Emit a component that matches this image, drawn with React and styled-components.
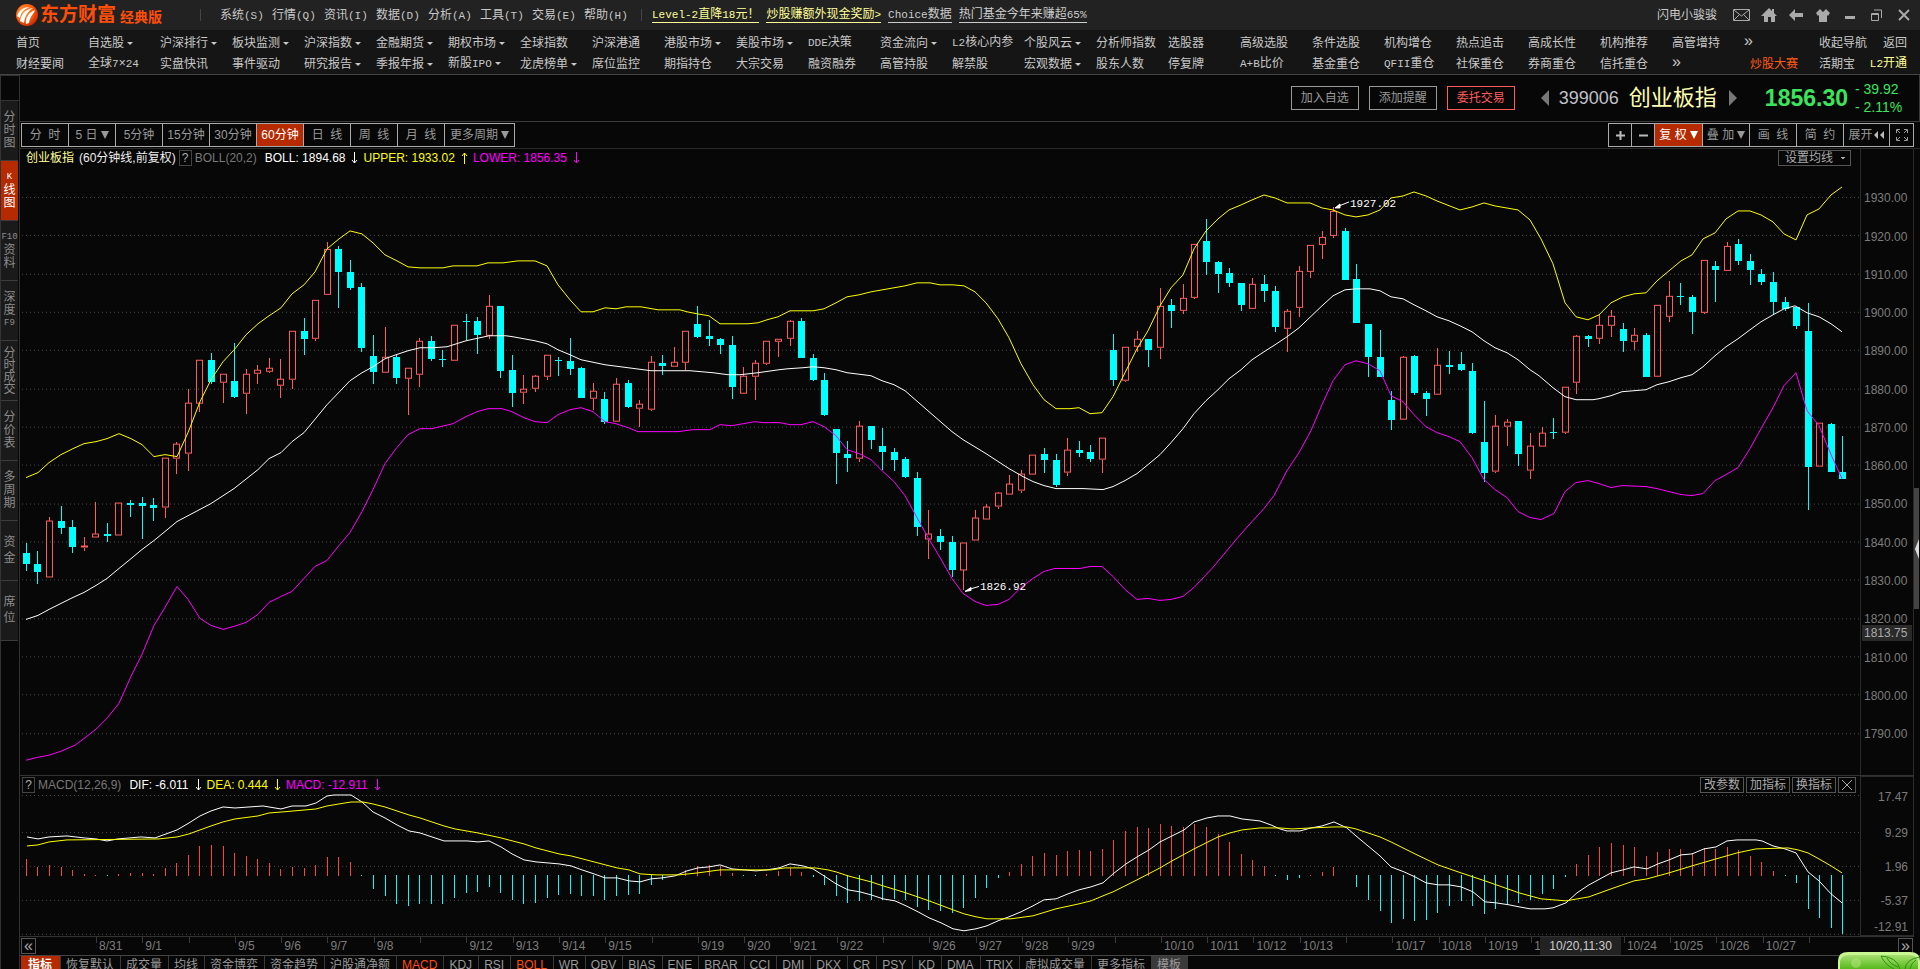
import React from "react";
import styled, { createGlobalStyle, css } from "styled-components";

const navTop = [
  "首页", "自选股*", "沪深排行*", "板块监测*", "沪深指数*", "金融期货*", "期权市场*", "全球指数",
  "沪深港通", "港股市场*", "美股市场*", "DDE决策", "资金流向*", "L2核心内参", "个股风云*", "分析师指数",
  "选股器", "高级选股", "条件选股", "机构增仓", "热点追击", "高成长性", "机构推荐", "高管增持",
];
const navBottom = [
  "财经要闻", "全球7×24", "实盘快讯", "事件驱动", "研究报告*", "季报年报*", "新股IPO*", "龙虎榜单*",
  "席位监控", "期指持仓", "大宗交易", "融资融券", "高管持股", "解禁股", "宏观数据*", "股东人数",
  "停复牌", "A+B比价", "基金重仓", "QFII重仓", "社保重仓", "券商重仓", "信托重仓",
];
const menus = ["系统(S)", "行情(Q)", "资讯(I)", "数据(D)", "分析(A)", "工具(T)", "交易(E)", "帮助(H)"];
const sideTabs = [
  ["分", "时", "图"], ["K", "线", "图"], ["F10", "资", "料"], ["深", "度", "F9"], ["分", "时", "成", "交"],
  ["分", "价", "表"], ["多", "周", "期"], ["资", "金"], ["席", "位"],
];
const periods = ["分  时", "5 日*", "5分钟", "15分钟", "30分钟", "60分钟", "日  线", "周  线", "月  线", "更多周期*"];
const indicators = [
  "指标", "恢复默认", "成交量", "均线", "资金博弈", "资金趋势", "沪股通净额", "MACD", "KDJ", "RSI", "BOLL",
  "WR", "OBV", "BIAS", "ENE", "BRAR", "CCI", "DMI", "DKX", "CR", "PSY", "KD", "DMA", "TRIX", "虚拟成交量",
  "更多指标", "模板",
];
const dates = [
  "8/31", "9/1", "", "9/5", "9/6", "9/7", "9/8", "", "9/12", "9/13", "9/14", "9/15", "", "9/19", "9/20",
  "9/21", "9/22", "", "9/26", "9/27", "9/28", "9/29", "", "10/10", "10/11", "10/12", "10/13", "", "10/17",
  "10/18", "10/19", "1", "", "10/24", "10/25", "10/26", "10/27", "",
];
const prices = Array.from({ length: 15 }, (_, i) => (1930 - i * 10).toFixed(2));

// u = up, d = down, then high, body top, body bottom, low on the chart canvas
const candles = `
d543,554,565,572 d552,565,573,585 u517,521,578,578 d506,521,528,534 d520,527,547,554 u537,546,548,552
u502,534,538,538 d523,534,536,542 u503,503,536,536 d500,503,505,517 d497,503,506,539 d498,505,508,521
u458,458,508,518 u442,444,459,474 u389,403,454,471 u360,360,404,412 d353,360,382,384 u374,374,383,403
d343,381,397,398 u369,374,394,414 u365,370,374,384 u358,368,372,373 u359,379,386,398 u331,331,380,389
d318,331,339,355 u300,300,339,341 u242,249,295,295 d246,249,272,308 d260,272,288,290 d283,287,348,352
d335,356,372,384 u327,357,373,373 d354,357,378,384 u368,368,379,415 u338,341,375,387 d336,341,359,361
d350,359,360,367 u325,325,361,361 d314,321,322,340 d317,321,335,354 u295,306,336,339 d306,306,371,378
d355,370,393,407 u375,389,393,404 u375,376,389,392 u355,355,377,380 d357,360,361,376 d338,361,369,375
d367,368,398,398 u383,391,399,410 d392,399,422,424 u378,384,422,422 d380,383,407,408 u400,404,409,427
u356,362,410,411 d355,363,366,375 u347,362,367,367 u331,331,363,370 d306,324,337,338 d320,336,339,346
d338,339,345,354 d336,345,387,399 u367,376,394,394 u360,363,377,400 u341,341,364,365 u339,339,342,357
u320,321,339,346 d318,321,358,358 d354,358,380,381 d373,380,415,416 d429,429,453,484 d441,454,458,472
u421,426,459,462 d426,426,440,449 d428,446,452,470 d448,452,460,471 d457,459,477,478 d472,478,527,536
u510,534,540,560 d529,536,542,551 d536,542,571,578 u543,543,571,591 u510,518,541,541 u504,507,520,520
u492,493,507,509 u475,484,495,495 u470,474,491,493 u455,455,475,475 d448,454,460,473 d454,460,485,487
u438,450,473,476 d441,450,453,457 d445,452,459,462 u438,438,460,473 d334,350,380,386 u347,347,381,382
u331,339,347,352 d339,339,350,367 u288,306,348,359 d299,305,311,328 u284,298,311,314 u244,244,298,299
d219,241,262,275 d261,262,274,293 d268,273,283,287 d283,283,305,311 u278,284,309,309 d275,284,291,302
d286,291,327,332 u309,311,329,352 u266,271,308,317 u245,245,272,278 u231,237,245,259 u207,211,236,238
d228,231,280,280 d264,279,323,323 d324,324,357,377 d330,357,377,377 d391,400,420,430 u356,357,420,420
d355,356,393,395 d391,393,399,416 u348,365,395,395 d351,365,367,374 d352,364,370,371 d363,371,433,434
d401,442,473,482 u415,426,472,473 u419,422,427,446 d421,421,454,466 u433,446,471,479 u427,433,447,447
d418,432,433,439 u387,387,433,434 u335,336,383,394 d335,336,339,347 u314,325,339,344 u310,316,326,337
d323,329,341,352 u328,335,342,350 d333,335,377,377 u305,305,377,377 u281,296,317,322 d283,296,297,305
d295,297,312,334 u260,260,313,314 d261,266,270,302 u242,246,271,271 d239,244,261,265 d254,261,270,285
d269,274,282,285 d272,282,302,315 d297,302,309,311 d307,307,326,329 d303,331,467,510 u423,423,467,467
d423,424,472,472 d436,472,479,479`
  .trim()
  .split(/\s+/)
  .map((c) => ({ up: c[0] === "u", v: c.slice(1).split(",").map(Number) }));

const upper =
  "26,478 38,473 49,463 61,455 73,449 84,444 96,442 107,439 119,434 131,439 142,445 154,457 165,455 177,457 188,433 200,402 211,380 223,362 235,349 246,335 258,324 269,316 281,308 292,294 304,285 315,272 327,249 339,239 350,231 362,234 373,243 385,255 397,261 408,267 420,268 443,268 453,266 477,266 488,263 503,263 518,261 535,261 547,266 558,285 570,300 581,312 593,312 605,308 616,309 626,307 641,307 658,310 680,310 687,312 697,314 709,316 720,324 748,324 758,323 767,320 778,317 790,311 813,311 824,309 836,303 847,297 859,295 871,292 905,286 917,283 930,283 940,285 953,285 964,286 975,292 986,303 998,319 1009,338 1021,364 1033,385 1044,400 1056,409 1070,409 1079,408 1090,414 1102,413 1113,397 1125,373 1137,349 1148,331 1160,306 1171,288 1183,275 1194,249 1206,231 1218,219 1229,210 1241,205 1252,200 1264,195 1275,198 1287,203 1310,203 1322,208 1333,210 1345,215 1356,217 1368,215 1380,210 1391,198 1403,196 1414,192 1426,196 1437,201 1460,210 1472,207 1484,203 1495,206 1518,210 1530,220 1541,239 1553,264 1565,303 1576,317 1588,320 1599,315 1611,303 1623,297 1634,294 1646,293 1657,281 1669,271 1681,261 1692,255 1703,239 1715,233 1726,219 1738,211 1750,211 1761,215 1773,222 1784,234 1796,240 1807,215 1819,209 1831,195 1842,187";
const middle =
  "26,620 38,616 49,610 61,604 73,598 84,593 96,586 107,579 119,569 130,560 142,550 154,541 165,532 177,522 211,504 234,489 258,470 269,459 281,453 292,442 304,433 327,405 350,381 362,373 373,367 385,359 396,355 408,351 420,348 433,348 447,347 466,341 489,336 506,336 513,337 535,341 547,344 558,350 570,355 581,360 605,365 651,371 690,371 713,373 728,375 740,375 758,373 779,370 788,369 803,368 813,367 824,368 836,370 847,373 871,376 882,381 894,385 905,391 929,412 952,432 963,440 986,454 1009,469 1023,477 1033,482 1044,486 1056,489 1083,489 1103,490 1113,487 1125,481 1137,474 1148,465 1160,455 1171,443 1183,429 1194,414 1206,401 1218,390 1229,379 1241,370 1252,360 1264,352 1275,345 1287,337 1299,328 1322,306 1333,296 1345,290 1356,289 1370,289 1380,291 1391,297 1403,299 1414,305 1426,311 1437,317 1449,321 1460,326 1472,332 1484,341 1495,348 1507,353 1518,360 1530,370 1539,376 1553,388 1565,397 1576,400 1593,400 1599,399 1611,396 1622,392 1646,390 1657,385 1669,382 1681,378 1692,375 1703,367 1715,356 1726,347 1738,339 1750,330 1761,322 1773,315 1784,309 1795,306 1807,313 1819,317 1831,324 1842,332";
const lower =
  "26,761 38,758 49,756 61,752 75,746 87,737 97,729 107,719 119,704 131,677 142,655 154,626 165,608 177,587 188,600 200,619 211,626 223,630 234,627 246,623 258,615 269,603 281,597 292,592 315,567 327,561 339,546 350,533 362,512 373,490 385,464 396,449 408,435 420,429 432,429 453,424 466,417 477,412 488,409 502,409 512,412 524,418 535,422 547,423 558,415 570,410 581,408 593,412 605,422 616,424 628,428 638,432 678,432 693,430 710,430 720,425 732,426 755,422 763,423 780,423 790,425 801,425 813,422 824,427 836,436 847,450 859,454 871,460 882,471 894,482 905,496 917,518 928,538 940,558 952,579 963,594 975,602 986,606 998,605 1009,600 1021,588 1033,579 1044,572 1055,569 1080,569 1090,567 1102,567 1113,577 1125,590 1137,600 1148,599 1160,601 1171,600 1183,597 1194,588 1212,569 1237,539 1252,522 1264,509 1274,496 1287,471 1299,453 1311,431 1322,405 1333,381 1345,365 1356,361 1368,364 1380,371 1391,396 1403,402 1414,415 1426,427 1437,433 1449,437 1460,442 1472,458 1484,480 1495,490 1507,498 1518,512 1530,518 1541,520 1554,514 1565,492 1576,483 1588,481 1599,484 1611,488 1622,486 1646,487 1657,489 1681,495 1692,496 1703,494 1715,481 1726,475 1738,468 1750,449 1761,429 1773,408 1784,386 1796,373 1807,411 1819,426 1831,455 1842,479";

const macdBars = [
  17, 9, 11, 9, 6, 2, 1, -1, 2, 3, 3, 2, 8, 13, 21, 30, 31, 30, 23, 20, 17, 13, 7, 9, 8, 11, 19, 19, 14, -1,
  -14, -21, -29, -31, -29, -29, -29, -23, -18, -17, -12, -18, -25, -29, -28, -23, -20, -19, -21, -21, -25,
  -21, -20, -19, -10, -5, 0, 6, 10, 11, 10, 3, -1, -1, 2, 5, 8, 4, -2, -10, -21, -28, -26, -25, -25, -24,
  -25, -32, -35, -36, -38, -33, -23, -13, -3, 4, 12, 20, 23, 21, 25, 26, 25, 27, 36, 45, 49, 48, 52, 50, 49,
  52, 49, 42, 34, 22, 16, 10, -1, -5, -3, 1, 4, 9, 0, -12, -25, -36, -48, -44, -46, -45, -38, -31, -26, -31,
  -39, -34, -29, -28, -25, -19, -14, -2, 12, 21, 29, 33, 31, 29, 20, 24, 27, 27, 23, 28, 27, 29, 26, 20, 14,
  5, -1, -8, -34, -43, -53, -59,
];
const dif =
  "27,77 38,79 49,77 67,76 84,78 96,79 107,81 118,79 141,77 155,78 166,74 177,70 189,63 200,56 211,51 223,47 235,48 263,46 281,49 292,46 306,46 316,43 327,36 334,35 351,35 362,42 373,52 385,58 397,65 409,71 420,73 432,77 444,81 467,81 478,82 489,81 501,87 512,94 524,100 536,102 559,104 571,106 582,110 594,114 605,118 617,118 629,121 640,122 651,119 662,118 675,116 687,111 698,108 709,107 720,105 732,109 744,110 756,111 767,110 779,108 790,104 803,106 813,109 824,116 836,124 848,130 860,132 871,135 883,139 895,141 906,146 918,152 929,158 941,163 953,169 964,171 976,169 987,166 998,161 1009,157 1021,152 1033,146 1044,140 1056,139 1068,134 1079,130 1091,127 1103,123 1113,114 1126,104 1137,97 1149,90 1160,82 1172,76 1184,70 1194,62 1207,58 1218,56 1230,56 1242,59 1260,61 1271,65 1280,69 1287,71 1300,71 1311,68 1322,66 1334,62 1347,68 1356,76 1368,86 1380,96 1391,107 1404,112 1415,117 1426,123 1438,125 1449,125 1461,127 1473,132 1485,142 1496,143 1509,145 1519,147 1530,149 1545,149 1553,148 1566,143 1577,133 1589,125 1600,119 1611,113 1623,110 1634,107 1647,109 1658,104 1669,100 1681,95 1692,94 1704,89 1716,87 1727,81 1737,80 1756,80 1762,81 1773,86 1785,89 1796,93 1808,112 1819,121 1831,134 1842,143";
const dea =
  "27,86 38,85 49,82 67,80 159,79 177,77 189,74 200,70 211,66 223,62 235,59 258,56 269,53 282,52 316,49 327,46 351,42 363,42 373,44 385,47 409,55 420,58 444,66 455,69 478,73 501,78 524,84 536,88 559,94 571,96 594,102 617,108 629,110 640,114 656,115 679,115 698,113 720,110 771,110 785,108 815,108 828,110 836,112 848,116 871,122 883,126 906,133 929,141 953,150 964,154 976,157 987,159 1011,159 1033,156 1056,149 1079,144 1091,141 1103,136 1113,132 1137,120 1160,108 1172,101 1194,89 1218,77 1230,73 1242,70 1260,68 1280,68 1292,69 1311,68 1334,67 1347,67 1356,69 1380,77 1391,82 1415,94 1438,105 1461,113 1485,121 1519,133 1541,139 1566,141 1589,137 1611,129 1634,121 1647,119 1669,113 1692,106 1716,99 1737,93 1756,89 1788,88 1798,90 1808,93 1819,99 1831,106 1842,113";

const barX = (i) => Math.floor(26.4 + (i * 1157) / 100);

// latin runs get the half-width face, hanzi keep the full-width one
const Mixed = ({ text }) =>
  text.split(/([\x21-\x7e]+)/).map((part, i) => (i % 2 ? <Half key={i}>{part}</Half> : part));

const NavItem = ({ text }) => (
  <NavLink href="#">
    <Mixed text={text.replace("*", "")} />
    {text.endsWith("*") && <Caret $size={3} />}
  </NavLink>
);

const Arrow = ({ up }) => (
  <ArrowSvg viewBox="0 0 7 12">
    <path d={up ? "M3.5 12V1M1 4l2.5-3L6 4" : "M3.5 0v11M1 8l2.5 3L6 8"} fill="none" stroke="currentColor" />
  </ArrowSvg>
);

const KChart = () => (
  <Plot viewBox="20 167 1840 609" preserveAspectRatio="none" shapeRendering="crispEdges">
    {prices.map((p, i) => {
      const y = Math.round(197 + (i * 230) / 6) + 0.5;
      return <line key={p} x1="22" x2="1860" y1={y} y2={y} stroke="#4a4a4a" strokeDasharray="1 3" />;
    })}
    {candles.map(({ up, v: [high, top, bottom, low] }, i) => {
      const x = barX(i);
      return up ? (
        <g key={i} fill="#ff5c5c">
          <rect x={x} y={high} width="1" height={top - high} />
          <rect x={x} y={bottom} width="1" height={low - bottom} />
          <rect x={x - 2.5} y={top + 0.5} width="6" height={Math.max(bottom - top - 1, 1)} fill="none" stroke="#ff5c5c" />
        </g>
      ) : (
        <g key={i} fill="#00ffff">
          <rect x={x} y={high} width="1" height={low - high} />
          <rect x={x - 3} y={top} width="7" height={Math.max(bottom - top, 1)} />
        </g>
      );
    })}
    <polyline points={upper} fill="none" stroke="#ffff00" />
    <polyline points={middle} fill="none" stroke="#ffffff" />
    <polyline points={lower} fill="none" stroke="#ff00ff" />
    <g fill="#ffffff" stroke="#ffffff">
      <path d="M1349 202L1339 206M1335 208l5-4v4z" />
      <path d="M979 587L969 590M965 592l6-4v3z" />
    </g>
    <Mark x="1350" y="207">1927.02</Mark>
    <Mark x="980" y="591">1826.92</Mark>
  </Plot>
);

const MacdChart = () => (
  <Plot viewBox="20 34 1840 142" preserveAspectRatio="none" shapeRendering="crispEdges">
    {[35, 72, 106, 140, 174].map((y) => (
      <line key={y} x1="22" x2="1862" y1={y + 0.5} y2={y + 0.5} stroke="#4a4a4a" strokeDasharray="1 3" />
    ))}
    {macdBars.map((h, i) => (
      <rect
        key={i}
        x={barX(i)}
        y={h > 0 ? 116 - h : 115}
        width="1"
        height={Math.abs(h)}
        fill={h > 0 ? "#ff4040" : "#00ffff"}
      />
    ))}
    <polyline points={dif} fill="none" stroke="#ffffff" />
    <polyline points={dea} fill="none" stroke="#ffff00" />
  </Plot>
);

const Logo = () => (
  <svg width="22" height="22" viewBox="0 0 22 22">
    <defs>
      <radialGradient id="ball" cx="35%" cy="35%" r="70%">
        <stop offset="0" stopColor="#ffa040" />
        <stop offset="0.6" stopColor="#ff5a0a" />
        <stop offset="1" stopColor="#c62a00" />
      </radialGradient>
    </defs>
    <circle cx="11" cy="11" r="11" fill="url(#ball)" />
    <path d="M1 12C3 6 8 3 14 3c-6 2-9 5-10 11z" fill="#fff" />
    <path d="M4 17C5 10 10 5 17 4c-6 4-8 8-9 15z" fill="#fff" />
    <path d="M10 20c-1-6 3-12 9-14 0 2-5 6-6 13z" fill="#fff" />
  </svg>
);

const App = () => {
  return (
    <Page>
      <GlobalStyle />
      <TitleBar>
        <Brand>
          <Logo />
          <BrandName>东方财富</BrandName>
          <Edition>经典版</Edition>
        </Brand>
        <Split />
        <MenuBar>
          {menus.map((m) => (
            <MenuButton key={m}>
              <Mixed text={m} />
            </MenuButton>
          ))}
        </MenuBar>
        <Split />
        <Promos>
          <Promo href="#" $hot><Mixed text="Level-2直降18元！" /></Promo>
          <Promo href="#" $hot><Mixed text="炒股赚额外现金奖励>" /></Promo>
          <Promo href="#"><Mixed text="Choice数据" /></Promo>
          <Promo href="#"><Mixed text="热门基金今年来赚超65%" /></Promo>
        </Promos>
        <User>闪电小骏骏</User>
        <WindowButtons>
          <IconButton aria-label="消息">
            <svg width="17" height="12" viewBox="0 0 17 12" fill="none" stroke="#aaa">
              <path d="M.5.5h16v11H.5zM1 1l7.500 6L16 1M1 11l5-5M16 11l-5-5" />
            </svg>
          </IconButton>
          <IconButton aria-label="主页">
            <svg width="16" height="14" viewBox="0 0 16 14" fill="#aaa">
              <path d="M8 0l3 3V1h2v4l3 3h-2v6h-4V9H7v5H3V8H0z" />
            </svg>
          </IconButton>
          <IconButton aria-label="后退">
            <svg width="14" height="12" viewBox="0 0 14 12" fill="#aaa"><path d="M0 6l6-6v4h8v4H6v4z" /></svg>
          </IconButton>
          <IconButton aria-label="换肤">
            <svg width="14" height="13" viewBox="0 0 14 13" fill="#aaa">
              <path d="M4 0l3 3 3-3 4 4-2 3-1-1v7H3V6L2 7 0 4z" />
            </svg>
          </IconButton>
          <IconButton aria-label="最小化">
            <svg width="10" height="12" viewBox="0 0 10 12" fill="#aaa"><path d="M0 7h10v3H0z" /></svg>
          </IconButton>
          <IconButton aria-label="还原">
            <svg width="11" height="12" viewBox="0 0 11 12" fill="none" stroke="#aaa">
              <path d="M.5 4.500h7v7h-7zM.5 5.500h7M3 1h7.500v8" />
            </svg>
          </IconButton>
          <IconButton aria-label="关闭">
            <svg width="12" height="12" viewBox="0 0 12 12" stroke="#aaa" strokeWidth="2"><path d="M1 1l10 10M11 1L1 11" /></svg>
          </IconButton>
        </WindowButtons>
      </TitleBar>

      <Nav>
        <NavRows>
          <NavRow>
            {navTop.map((n) => <NavItem key={n} text={n} />)}
            <More href="#">»</More>
          </NavRow>
          <NavRow>
            {navBottom.map((n) => <NavItem key={n} text={n} />)}
            <More href="#">»</More>
          </NavRow>
        </NavRows>
        <NavSide>
          <span />
          <SideLink href="#">收起导航</SideLink>
          <SideLink href="#" $end>返回</SideLink>
          <SideLink href="#" $color="#ff5a14">炒股大赛</SideLink>
          <SideLink href="#">活期宝</SideLink>
          <SideLink href="#" $end $color="#ffff99"><Mixed text="L2开通" /></SideLink>
        </NavSide>
      </Nav>

      <Body>
        <SideBar>
          <SideGap />
          {sideTabs.map((t) => (
            <SideTab key={t.join("")} $active={t[0] === "K"} $loose={t.length === 2} $tight={t.length === 4}>
              {t.map((c) => (/\w/.test(c) ? <SideLatin key={c}>{c}</SideLatin> : <span key={c}>{c}</span>))}
            </SideTab>
          ))}
        </SideBar>
        <Content>
          <Quote>
            <Actions>
              <ActionButton>加入自选</ActionButton>
              <ActionButton>添加提醒</ActionButton>
              <ActionButton $trade>委托交易</ActionButton>
            </Actions>
            <Step aria-label="上一个"><svg width="8" height="16"><path d="M8 0v16L0 8z" fill="#777" /></svg></Step>
            <Code>399006</Code>
            <Name>创业板指</Name>
            <Step aria-label="下一个"><svg width="8" height="16"><path d="M0 0v16l8-8z" fill="#777" /></svg></Step>
            <Price>1856.30</Price>
            <Change>
              <span>- 39.92</span>
              <span>- 2.11%</span>
            </Change>
          </Quote>

          <ToolBar>
            <Group>
              {periods.map((p) => (
                <ToolButton key={p} $active={p === "60分钟"} $width={p.length > 4 ? 70 : 47}>
                  {p.replace("*", "")}
                  {p.endsWith("*") && <Caret $size={4} $tall />}
                </ToolButton>
              ))}
            </Group>
            <Group>
              <ToolButton $width={23} aria-label="放大">
                <svg width="9" height="9" stroke="#bbb" strokeWidth="2"><path d="M0 4.500h9M4.500 0v9" /></svg>
              </ToolButton>
              <ToolButton $width={23} aria-label="缩小">
                <svg width="9" height="9" stroke="#bbb" strokeWidth="2"><path d="M0 4.500h9" /></svg>
              </ToolButton>
              <ToolButton $width={48} $active>复 权<Caret $size={4} $tall /></ToolButton>
              <ToolButton $width={47}>叠 加<Caret $size={4} $tall /></ToolButton>
              <ToolButton $width={47}>{"画  线"}</ToolButton>
              <ToolButton $width={47}>{"简  约"}</ToolButton>
              <ToolButton $width={46}>
                展开
                <svg width="12" height="8" fill="#bbb"><path d="M5 0v8L1 4zM11 0v8L7 4z" /></svg>
              </ToolButton>
              <ToolButton $width={24} aria-label="全屏">
                <svg width="12" height="12" viewBox="0 0 12 12" fill="none" stroke="#999">
                  <path d="M.5 4V.5H4M8 .5h3.500V4M11.500 8v3.500H8M4 11.500H.5V8M1 1l3 3M11 1L8 4M11 11L8 8M1 11l3-3" />
                </svg>
              </ToolButton>
            </Group>
          </ToolBar>

          <Desk>
            <Panes>
              <Pane $share={627}>
                <Canvas>
                  <InfoRow>
                    <Title>创业板指</Title>
                    <Period>(60分钟线,前复权)</Period>
                    <Help>?</Help>
                    <Formula>BOLL(20,2)</Formula>
                    <Value $color="#fff">BOLL: 1894.68<Arrow /></Value>
                    <Value $color="#ffff00">UPPER: 1933.02<Arrow up /></Value>
                    <Value $color="#ff00ff">LOWER: 1856.35<Arrow /></Value>
                    <Average aria-label="设置均线" defaultValue="a">
                      <option value="a">设置均线</option>
                    </Average>
                  </InfoRow>
                  <KChart />
                </Canvas>
                <PriceAxis>
                  {prices.map((p) => <span key={p}>{p}</span>)}
                  <PriceTag>1813.75</PriceTag>
                </PriceAxis>
              </Pane>
              <Pane $share={160} $line>
                <Canvas>
                  <InfoRow>
                    <Help>?</Help>
                    <Formula>MACD(12,26,9)</Formula>
                    <Value $color="#fff">DIF: -6.011<Arrow /></Value>
                    <Value $color="#ffff00">DEA: 0.444<Arrow /></Value>
                    <Value $color="#ff00ff">MACD: -12.911<Arrow /></Value>
                    <PaneButtons>
                      <SmallButton>改参数</SmallButton>
                      <SmallButton>加指标</SmallButton>
                      <SmallButton>换指标</SmallButton>
                      <SmallButton aria-label="关闭">
                        <svg width="10" height="10" stroke="#aaa"><path d="M0 0l10 10M10 0L0 10" /></svg>
                      </SmallButton>
                    </PaneButtons>
                  </InfoRow>
                  <MacdChart />
                </Canvas>
                <MacdAxis>
                  <span>17.47</span>
                  <span>9.29</span>
                  <span>1.96</span>
                  <span>-5.37</span>
                  <span>-12.91</span>
                </MacdAxis>
              </Pane>
              <TimeAxis>
                <Days>
                  <ScrollButton aria-label="向左">«</ScrollButton>
                  {dates.map((d, i) => <Day key={i}>{d}</Day>)}
                  <Cursor>10/20,11:30</Cursor>
                </Days>
                <ScrollButton aria-label="向右" $end>»</ScrollButton>
              </TimeAxis>
            </Panes>
            <Strip>
              <Thumb aria-label="展开侧栏">
                <svg width="4" height="20"><path d="M4 0v20L0 10z" fill="#ddd" /></svg>
              </Thumb>
            </Strip>
          </Desk>
          <Indicators>
            {indicators.map((t) => (
              <Tab key={t} $active={t === "指标"} $on={t === "MACD" || t === "BOLL"} $grey={t === "模板"}>
                {t}
              </Tab>
            ))}
          </Indicators>
        </Content>
      </Body>
      <Leaf viewBox="0 0 82 17">
        <defs>
          <linearGradient id="leaf" x2="0" y2="1">
            <stop offset="0" stopColor="#a8e070" />
            <stop offset="1" stopColor="#55b81c" />
          </linearGradient>
        </defs>
        <path d="M0 17V9Q0 0 10 0h62q10 0 10 9v8z" fill="#c9f792" />
        <path d="M2 17v-6Q2 3 11 3h60q9 0 9 8v6z" fill="url(#leaf)" />
        <path d="M43 4q16 1 19 13M43 4q4 9 13 13M49 6q3 6 11 9M82 5q-14 2-15 12M78 8q-5 3-6 9" fill="none" stroke="#2f8f12" />
        <circle cx="18" cy="11" r="5" fill="#b5ea80" opacity="0.5" />
      </Leaf>
    </Page>
  );
};

const GlobalStyle = createGlobalStyle`
  body {
    margin: 0;
    background: #070707;
    overflow: hidden;
  }
  * {
    box-sizing: border-box;
  }
  button, select {
    font: inherit;
    color: inherit;
    background: none;
    border: 0;
    border-radius: 0;
    padding: 0;
    margin: 0;
  }
  a {
    color: inherit;
    text-decoration: none;
  }
`;

const Page = styled.div`
  height: 100vh;
  display: flex;
  flex-direction: column;
  font-family: "Liberation Sans", "Noto Sans CJK SC", sans-serif;
  font-size: 12px;
  line-height: 14px;
  color: #aaa;
  background: #070707;
  overflow: hidden;
`;
const Half = styled.span`
  font-family: "Liberation Mono", monospace;
  font-size: 11px;
`;
const Caret = styled.i`
  display: inline-block;
  flex: none;
  width: 0;
  height: 0;
  vertical-align: middle;
  margin-left: 3px;
  border: ${(p) => p.$size}px solid transparent;
  border-top: ${(p) => (p.$tall ? 8 : p.$size)}px solid currentColor;
  border-bottom: 0;
`;

const TitleBar = styled.header`
  flex: none;
  display: flex;
  align-items: center;
  height: 30px;
  padding-right: 3px;
  background: #222;
  color: #c8c8c8;
`;
const Brand = styled.div`
  display: flex;
  align-items: center;
  width: 200px;
  padding-left: 16px;
  color: #ff4e08;
  font-weight: bold;
  white-space: nowrap;
`;
const BrandName = styled.span`
  margin-left: 2px;
  font-size: 19px;
  line-height: 24px;
`;
const Edition = styled.span`
  margin: 4px 0 0 4px;
  font-size: 14px;
`;
const Split = styled.i`
  width: 1px;
  height: 12px;
  background: #444;
`;
const MenuBar = styled.nav`
  display: flex;
  padding: 0 5px 0 19px;
`;
const MenuButton = styled.button`
  width: 52px;
  text-align: left;
  white-space: nowrap;
`;
const Promos = styled.div`
  flex: 1;
  display: flex;
  gap: 7px;
  padding-left: 10px;
`;
const Promo = styled.a`
  border-bottom: 1px solid;
  color: ${(p) => (p.$hot ? "#ffff99" : "#ccc")};
  white-space: nowrap;
`;
const User = styled.span`
  margin-right: 11px;
`;
const WindowButtons = styled.div`
  display: flex;
`;
const IconButton = styled.button`
  display: flex;
  align-items: center;
  justify-content: center;
  width: 27px;
  height: 20px;
`;

const Nav = styled.nav`
  flex: none;
  display: flex;
  justify-content: space-between;
  padding-top: 2px;
  background: #151515;
  border-bottom: 1px solid #444;
  color: #c8c8c8;
`;
const NavRows = styled.div`
  flex: 1;
  min-width: 0;
  padding-left: 16px;
`;
const NavRow = styled.div`
  display: flex;
  align-items: center;
  height: 21px;
`;
const NavLink = styled.a`
  flex: none;
  width: 72px;
  white-space: nowrap;
`;
const More = styled.a`
  width: 6px;
  font-size: 16px;
  line-height: 12px;
  padding-bottom: 4px;
`;
const NavSide = styled.div`
  display: grid;
  grid-template-columns: 69px 48px 40px;
  grid-auto-rows: 21px;
  align-items: center;
  padding-right: 13px;
`;
const SideLink = styled.a`
  color: ${(p) => p.$color || "inherit"};
  text-align: ${(p) => (p.$end ? "right" : "left")};
  white-space: nowrap;
`;

const Body = styled.div`
  flex: 1;
  min-height: 0;
  display: flex;
`;
const SideBar = styled.aside`
  flex: none;
  width: 20px;
  border: solid #333;
  border-width: 0 1px;
`;
const SideGap = styled.div`
  height: 26px;
  border: 1px solid #333;
  border-width: 1px 0;
`;
const SideTab = styled.button`
  display: flex;
  flex-direction: column;
  align-items: center;
  justify-content: center;
  gap: ${(p) => (p.$loose ? 3 : 0)}px;
  width: 17px;
  height: 60px;
  border-bottom: 1px solid #3c3c3c;
  line-height: ${(p) => (p.$tight ? 12 : 13)}px;
  ${(p) =>
    p.$active
      ? css`
          background: #b52a00;
          color: #fff;
        `
      : css`
          background: #1a1a1a;
          color: #8c8c8c;
        `}
`;
const SideLatin = styled.span`
  font-family: "Liberation Mono", monospace;
  font-size: 9px;
`;
const Content = styled.main`
  flex: 1;
  min-width: 0;
  display: flex;
  flex-direction: column;
`;

const Quote = styled.section`
  flex: none;
  display: flex;
  align-items: center;
  justify-content: flex-end;
  height: 47px;
  border: solid #3a3a3a;
  border-width: 0 1px 1px 0;
`;
const Actions = styled.div`
  display: flex;
  gap: 10px;
  margin-right: 26px;
`;
const ActionButton = styled.button`
  width: 68px;
  height: 24px;
  border: 1px solid;
  color: ${(p) => (p.$trade ? "#ff5b5b" : "#999")};
`;
const Step = styled.button`
  display: flex;
`;
const Code = styled.span`
  margin: 0 10px;
  font-size: 18px;
  line-height: 22px;
  color: #c0c0c8;
`;
const Name = styled.h1`
  margin: 0 12px 0 0;
  font-size: 22px;
  line-height: 28px;
  font-weight: normal;
  color: #ffffb0;
`;
const Price = styled.strong`
  margin: 0 7px 0 28px;
  font-size: 23px;
  line-height: 28px;
  color: #3ce45c;
`;
const Change = styled.div`
  display: flex;
  flex-direction: column;
  width: 64px;
  font-size: 14px;
  line-height: 18px;
  color: #3ce45c;
`;

const ToolBar = styled.div`
  flex: none;
  display: flex;
  justify-content: space-between;
  height: 27px;
  padding: 1px 6px 1px 1px;
  border-bottom: 1px solid #2a2a2a;
`;
const Group = styled.div`
  display: flex;
  border: 1px solid #aaa;
  border-right: 0;
`;
const ToolButton = styled.button`
  display: flex;
  align-items: center;
  justify-content: center;
  width: ${(p) => p.$width}px;
  border-right: 1px solid #aaa;
  background: ${(p) => (p.$active ? "#b52a00" : "none")};
  color: ${(p) => (p.$active ? "#fff" : "#999")};
  white-space: pre;
`;

const Desk = styled.div`
  flex: 1;
  min-height: 0;
  display: flex;
`;
const Panes = styled.div`
  flex: 1;
  min-width: 0;
  display: flex;
  flex-direction: column;
`;
const Pane = styled.section`
  flex: ${(p) => p.$share} 1 0;
  min-height: 0;
  display: grid;
  grid-template-columns: 1fr 54px;
  grid-template-rows: 100%;
  ${(p) =>
    p.$line &&
    css`
      border-top: 1px solid #333;
    `}
`;
const Canvas = styled.div`
  display: flex;
  flex-direction: column;
  min-width: 0;
  min-height: 0;
`;
const Plot = styled.svg`
  display: block;
  flex: 1;
  width: 100%;
  min-height: 0;
`;
const Mark = styled.text`
  font-family: "Liberation Mono", monospace;
  font-size: 11px;
  fill: #fff;
`;
const InfoRow = styled.div`
  flex: none;
  display: flex;
  align-items: center;
  height: 18px;
  padding: 0 4px 0 2px;
  white-space: nowrap;
`;
const Title = styled.span`
  margin: 0 5px 0 4px;
  color: #ffff99;
`;
const Period = styled.span`
  margin-right: 3px;
  color: #eee;
`;
const Help = styled.button`
  width: 13px;
  height: 16px;
  border: 1px solid #444;
`;
const Formula = styled.span`
  margin: 0 5px 0 3px;
  color: #777;
`;
const Value = styled.span`
  display: flex;
  align-items: center;
  margin: 0 2px 0 3px;
  color: ${(p) => p.$color};
`;
const ArrowSvg = styled.svg`
  width: 7px;
  height: 12px;
  margin-left: 6px;
`;
const Average = styled.select`
  appearance: none;
  width: 73px;
  height: 16px;
  margin: 0 5px 0 auto;
  padding-left: 6px;
  border: 1px solid #555;
  color: #aaa;
  line-height: 14px;
  background: linear-gradient(135deg, #aaa 50%, transparent 50%) 64px 6px / 3px 3px no-repeat,
    linear-gradient(225deg, #aaa 50%, transparent 50%) 61px 6px / 3px 3px no-repeat;
`;
const PaneButtons = styled.div`
  display: flex;
  gap: 2px;
  margin-left: auto;
`;
const SmallButton = styled.button`
  display: flex;
  align-items: center;
  height: 16px;
  padding: 0 3px;
  border: 1px solid #555;
`;
const PriceAxis = styled.div`
  position: relative;
  display: grid;
  grid-template-rows: 304fr repeat(15, 383fr) 221fr;
  align-items: center;
  padding-left: 3px;
  border: solid #2a2a2a;
  border-width: 0 1px;
  color: #7c7c7c;

  &::before {
    content: "";
  }
`;
const PriceTag = styled.strong`
  position: absolute;
  top: 76%;
  left: 1px;
  right: 1px;
  padding: 1px 2px;
  font-weight: normal;
  background: #2a2a2a;
  color: #aaa;
`;
const MacdAxis = styled.div`
  display: grid;
  grid-template-rows: 39fr 35fr 33fr 35fr 17fr;
  align-items: center;
  padding-right: 5px;
  border: 1px solid #2c2c2c;
  text-align: right;
  color: #7c7c7c;
`;
const TimeAxis = styled.div`
  flex: none;
  display: grid;
  grid-template-columns: 1fr 54px;
  height: 19px;
  border-top: 1px solid #333;
  color: #7c7c7c;
`;
const Days = styled.div`
  position: relative;
  display: grid;
  grid-template-columns: 760fr repeat(38, 463fr) 46fr;
`;
const Day = styled.span`
  min-width: 0;
  padding: 2px 0 0 3px;
  white-space: nowrap;
  background: linear-gradient(#3a3a3a, #3a3a3a) 0 0 / 1px 6px no-repeat;
`;
const Cursor = styled.strong`
  position: absolute;
  right: 13%;
  bottom: 0;
  padding: 2px 9px;
  font-weight: normal;
  background: #222;
  color: #ccc;
`;
const ScrollButton = styled.button`
  justify-self: ${(p) => (p.$end ? "end" : "start")};
  width: 15px;
  height: 16px;
  margin: 1px;
  border: 1px solid #555;
  font-size: 16px;
  line-height: 12px;
  color: #aaa;
`;
const Strip = styled.aside`
  flex: none;
  display: flex;
  flex-direction: column;
  width: 6px;
  padding-top: 339px;
`;
const Thumb = styled.button`
  display: flex;
  align-items: center;
  justify-content: flex-end;
  width: 5px;
  height: 121px;
  background: #444;
`;
const Indicators = styled.div`
  flex: none;
  display: flex;
  height: 14px;
  padding-left: 1px;
  border-top: 1px solid #444;
  overflow: hidden;
`;
const Tab = styled.button`
  flex: none;
  height: 17px;
  padding: 0 ${(p) => (p.$active ? "8px 0 7px" : "6px 0 5px")};
  border-right: 1px solid #3a3a3a;
  line-height: 16px;
  color: ${(p) => (p.$active ? "#fff" : p.$on ? "#ff4e08" : "#999")};
  background: ${(p) => (p.$active ? "#b52a00" : p.$grey ? "#3a3a3a" : "none")};
  font-weight: ${(p) => (p.$active ? "bold" : "normal")};
`;
const Leaf = styled.svg`
  position: absolute;
  right: 0;
  bottom: 0;
  width: 82px;
  height: 17px;
`;

export default App;
